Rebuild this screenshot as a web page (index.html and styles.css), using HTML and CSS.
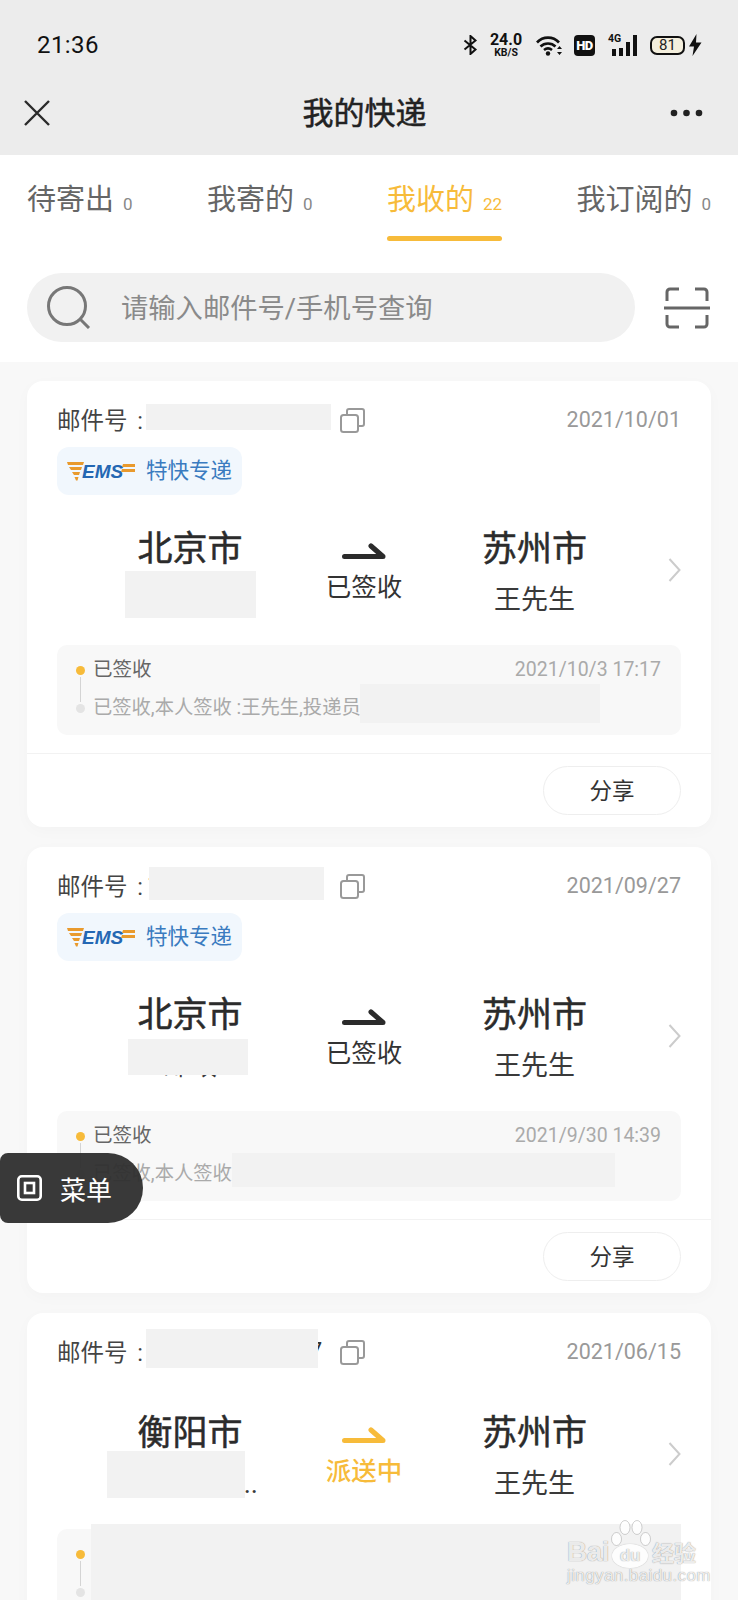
FILE: index.html
```html
<!DOCTYPE html>
<html lang="zh-CN">
<head>
<meta charset="utf-8">
<title>我的快递</title>
<link rel="stylesheet" href="styles.css">
</head>
<body>
<header class="top">
  <div class="status">
    <span class="time">21:36</span>
    <div class="status-icons">
      <svg class="i-bt" width="15" height="20" viewBox="0 0 15 20"><path d="M1.500 5.500 12.500 14.500 7.500 19V1l5 4.500L1.500 14.500" fill="none" stroke="#111" stroke-width="2"/></svg>
      <div class="speed"><b>24.0</b><small>KB/S</small></div>
      <svg class="i-wifi" width="27" height="21" viewBox="0 0 27 21"><g fill="none" stroke="#111" stroke-width="2.600"><path d="M1 7.500C7 1 17 1 23 7.500"/><path d="M4.500 11.500C8.500 7.500 15.500 7.500 19.500 11.500"/><path d="M8 15c2.500-2 5.500-2 8 0"/></g><circle cx="12" cy="18.500" r="2.200" fill="#111"/><path d="M23.500 11l2.500 3h-5zM23.500 20l2.500-3h-5z" fill="#111"/></svg>
      <div class="hd">HD</div>
      <div class="net">
        <span class="net-label">4G</span>
        <svg width="29" height="21" viewBox="0 0 29 21"><path d="M4 14h4v7H4zM11 13h4v8h-4zM18 7h4v14h-4zM25 0h4v21h-4z" fill="#111"/></svg>
      </div>
      <div class="battery">81</div>
      <svg class="i-bolt" width="14" height="22" viewBox="0 0 14 22"><path d="M8.500 0 1 12.500h5L4.500 22 13.500 8.500H8z" fill="#111"/></svg>
    </div>
  </div>
  <div class="nav">
    <svg class="nav-close" width="26" height="26" viewBox="0 0 26 26"><path d="M1 1 25 25M25 1 1 25" fill="none" stroke="#2a2a2a" stroke-width="2.400"/></svg>
    <h1 class="nav-title">我的快递</h1>
    <svg class="nav-more" width="33" height="8" viewBox="0 0 33 8"><circle cx="4" cy="4" r="3.300" fill="#222"/><circle cx="16.500" cy="4" r="3.300" fill="#222"/><circle cx="29" cy="4" r="3.300" fill="#222"/></svg>
  </div>
</header>

<section class="filters">
  <nav class="tabs">
    <a class="tab">待寄出<span class="count">0</span></a>
    <a class="tab">我寄的<span class="count">0</span></a>
    <a class="tab is-active">我收的<span class="count">22</span></a>
    <a class="tab">我订阅的<span class="count">0</span></a>
  </nav>
  <div class="search-row">
    <div class="search">
      <svg width="44" height="43" viewBox="0 0 44 43"><circle cx="20" cy="20" r="18.500" fill="none" stroke="#777" stroke-width="3"/><path d="M33 33 42 42" stroke="#777" stroke-width="3" fill="none"/></svg>
      <span class="search-hint">请输入邮件号/手机号查询</span>
    </div>
    <svg width="46" height="42" viewBox="0 0 46 42"><g fill="none" stroke="#666" stroke-width="3"><path d="M3 14V5a3 3 0 0 1 3-3h9M31 2h9a3 3 0 0 1 3 3v9M3 28v9a3 3 0 0 0 3 3h9M31 40h9a3 3 0 0 0 3-3v-9"/><path d="M0 21h46"/></g></svg>
  </div>
</section>

<main class="list">
  <article class="card">
    <div class="num-row">
      <span class="num-label">邮件号 :</span>
      <span class="num">1100000000001</span>
      <svg class="copy" width="25" height="25" viewBox="0 0 25 25"><g fill="none" stroke="#999" stroke-width="2"><rect x="1" y="7" width="17" height="17" rx="2.500"/><path d="M7 7V3a2 2 0 0 1 2-2h13a2 2 0 0 1 2 2v13a2 2 0 0 1-2 2h-4"/></g></svg>
      <span class="date">2021/10/01</span>
    </div>
    <div class="carrier">
      <svg width="68" height="20" viewBox="0 0 68 20"><path d="M0 1h17l-1 3H1zM2 6h13l-1 3H4zM5 11h8l-1 3H7zM7.500 16h4l-1 3.500H9z" fill="#e99a2d"/><text x="15" y="17" class="ems-word">EMS</text><path d="M56 3h12v3H55zM55 8h13v3H54z" fill="#e99a2d"/></svg>
      <span>特快专递</span>
    </div>
    <div class="route">
      <div class="place">
        <div class="city">北京市</div>
        <div class="person">中国邮政</div>
      </div>
      <div class="state">
        <svg width="44" height="17" viewBox="0 0 44 17"><path d="M2.500 13.500H41L29 3" fill="none" stroke="#2b2b2b" stroke-width="5" stroke-linecap="round" stroke-linejoin="round"/></svg>
        <span>已签收</span>
      </div>
      <div class="place place-to">
        <div class="city">苏州市</div>
        <div class="person">王先生</div>
      </div>
      <svg class="chevron" width="13" height="24" viewBox="0 0 13 24"><path d="M1.500 1 11.500 12 1.500 23" fill="none" stroke="#ccc" stroke-width="2"/></svg>
    </div>
    <div class="trace">
      <div class="track"><i class="dot dot-on"></i><i class="rail"></i><i class="dot"></i></div>
      <div class="trace-lines">
        <div class="trace-head"><span>已签收</span><time>2021/10/3 17:17</time></div>
        <div class="trace-text">已签收,本人签收 :王先生,投递员</div>
      </div>
    </div>
    <div class="actions"><button class="share">分享</button></div>
    <i class="mask m1-num"></i><i class="mask m1-person"></i><i class="mask m1-trace"></i>
  </article>

  <article class="card">
    <div class="num-row">
      <span class="num-label">邮件号 :</span>
      <span class="num">1100000000002</span>
      <svg class="copy" width="25" height="25" viewBox="0 0 25 25"><g fill="none" stroke="#999" stroke-width="2"><rect x="1" y="7" width="17" height="17" rx="2.500"/><path d="M7 7V3a2 2 0 0 1 2-2h13a2 2 0 0 1 2 2v13a2 2 0 0 1-2 2h-4"/></g></svg>
      <span class="date">2021/09/27</span>
    </div>
    <div class="carrier">
      <svg width="68" height="20" viewBox="0 0 68 20"><path d="M0 1h17l-1 3H1zM2 6h13l-1 3H4zM5 11h8l-1 3H7zM7.500 16h4l-1 3.500H9z" fill="#e99a2d"/><text x="15" y="17" class="ems-word">EMS</text><path d="M56 3h12v3H55zM55 8h13v3H54z" fill="#e99a2d"/></svg>
      <span>特快专递</span>
    </div>
    <div class="route">
      <div class="place">
        <div class="city">北京市</div>
        <div class="person">邮政</div>
      </div>
      <div class="state">
        <svg width="44" height="17" viewBox="0 0 44 17"><path d="M2.500 13.500H41L29 3" fill="none" stroke="#2b2b2b" stroke-width="5" stroke-linecap="round" stroke-linejoin="round"/></svg>
        <span>已签收</span>
      </div>
      <div class="place place-to">
        <div class="city">苏州市</div>
        <div class="person">王先生</div>
      </div>
      <svg class="chevron" width="13" height="24" viewBox="0 0 13 24"><path d="M1.500 1 11.500 12 1.500 23" fill="none" stroke="#ccc" stroke-width="2"/></svg>
    </div>
    <div class="trace">
      <div class="track"><i class="dot dot-on"></i><i class="rail"></i><i class="dot"></i></div>
      <div class="trace-lines">
        <div class="trace-head"><span>已签收</span><time>2021/9/30 14:39</time></div>
        <div class="trace-text">已签收,本人签收</div>
      </div>
    </div>
    <div class="actions"><button class="share">分享</button></div>
    <i class="mask m2-num"></i><i class="mask m2-person"></i><i class="mask m2-trace"></i>
  </article>

  <article class="card">
    <div class="num-row">
      <span class="num-label">邮件号 :</span>
      <span class="num">1100000000007</span>
      <svg class="copy" width="25" height="25" viewBox="0 0 25 25"><g fill="none" stroke="#999" stroke-width="2"><rect x="1" y="7" width="17" height="17" rx="2.500"/><path d="M7 7V3a2 2 0 0 1 2-2h13a2 2 0 0 1 2 2v13a2 2 0 0 1-2 2h-4"/></g></svg>
      <span class="date">2021/06/15</span>
    </div>
    <div class="route">
      <div class="place">
        <div class="city">衡阳市</div>
        <div class="person">&#8194;中国邮政..</div>
      </div>
      <div class="state is-moving">
        <svg width="44" height="17" viewBox="0 0 44 17"><path d="M2.500 13.500H41L29 3" fill="none" stroke="#f7bb3a" stroke-width="5" stroke-linecap="round" stroke-linejoin="round"/></svg>
        <span>派送中</span>
      </div>
      <div class="place place-to">
        <div class="city">苏州市</div>
        <div class="person">王先生</div>
      </div>
      <svg class="chevron" width="13" height="24" viewBox="0 0 13 24"><path d="M1.500 1 11.500 12 1.500 23" fill="none" stroke="#ccc" stroke-width="2"/></svg>
    </div>
    <div class="trace">
      <div class="track"><i class="dot dot-on"></i><i class="rail"></i><i class="dot"></i></div>
    </div>
    <i class="mask m3-num"></i><i class="mask m3-person"></i><i class="mask m3-trace"></i>
  </article>
</main>

<button class="menu-float">
  <svg width="25" height="26" viewBox="0 0 25 26"><rect x="1.300" y="1.300" width="22.400" height="23.400" rx="3.500" fill="none" stroke="#fff" stroke-width="2.600"/><rect x="8" y="8" width="9" height="10" fill="none" stroke="#fff" stroke-width="2.600"/></svg>
  <span>菜单</span>
</button>

<div class="watermark">
  <svg class="paw" width="40" height="32" viewBox="0 0 40 32"><g fill="#fff" fill-opacity=".8" stroke="#aaa" stroke-opacity=".55"><ellipse cx="5.500" cy="19" rx="5" ry="6.500"/><ellipse cx="14" cy="7.500" rx="5" ry="7"/><ellipse cx="26" cy="7.500" rx="5" ry="7"/><ellipse cx="34.500" cy="19" rx="5" ry="6.500"/></g></svg>
  <div class="wm-brand"><span class="wm-bai">Bai</span><span class="wm-du">du</span><span class="wm-jy">经验</span></div>
  <div class="wm-url">jingyan.baidu.com</div>
</div>
</body>
</html>
```

FILE: styles.css
```css
* { box-sizing: border-box; }

html, body {
  margin: 0;
  height: 1600px;
  overflow: hidden;
}

body {
  position: relative;
  background: #f8f8f8;
  font-family: Roboto, "Noto Sans CJK SC", sans-serif;
  color: #333;
}

i { display: block; }

/* Status bar and title bar */
.top { height: 155px; background: #ececec; }

.status {
  height: 90px;
  padding: 0 36px 0 37px;
  display: flex;
  align-items: center;
  justify-content: space-between;
}

.time { font-size: 24px; color: #111; letter-spacing: .4px; }

.status-icons { display: flex; align-items: center; }

.speed {
  margin-left: 12px;
  width: 32px;
  display: flex;
  flex-direction: column;
  align-items: center;
  color: #111;
}
.speed b { font-size: 16px; line-height: 15px; font-weight: 700; }
.speed small { font-size: 10.500px; line-height: 11px; font-weight: 700; }

.i-wifi { margin-left: 14px; }

.hd {
  margin-left: 11px;
  width: 21px;
  height: 21px;
  border-radius: 4px;
  background: #111;
  color: #fff;
  font-size: 13px;
  line-height: 21px;
  font-weight: 900;
  text-align: center;
  letter-spacing: -.5px;
}

.net { margin-left: 13px; position: relative; width: 29px; height: 21px; }
.net-label {
  position: absolute;
  left: 0;
  top: -2px;
  font-size: 10.500px;
  line-height: 12px;
  font-weight: 700;
  color: #111;
}

.battery {
  margin-left: 13px;
  width: 35px;
  height: 19px;
  border: 2px solid #111;
  border-radius: 7px;
  background: #f4efdd;
  font-size: 15px;
  line-height: 15px;
  text-align: center;
  color: #222;
}

.i-bolt { margin-left: 3px; }

.nav {
  height: 65px;
  padding: 0 35px 25px 24px;
  display: grid;
  grid-template-columns: 1fr auto 1fr;
  align-items: center;
}
.nav-title {
  margin: 2px 0 0 2px;
  font-size: 31px;
  line-height: 44px;
  font-weight: 400;
  -webkit-text-stroke: .5px #222;
  color: #222;
}
.nav-more { justify-self: end; }

/* Tabs and search */
.filters { height: 207px; background: #fff; }

.tabs {
  padding: 0 27px;
  display: flex;
  justify-content: space-between;
}

.tab {
  padding-top: 25px;
  font-size: 29px;
  line-height: 40px;
  color: #666;
  white-space: nowrap;
}
.tab::after {
  content: "";
  display: block;
  height: 5px;
  margin-top: 16px;
  border-radius: 3px;
}
.tab.is-active { color: #f7bb3a; }
.tab.is-active::after { background: #f7bb3a; }

.count {
  margin-left: 9px;
  font-size: 17px;
  line-height: 1;
  color: #888;
}
.is-active .count { color: #f7bb3a; }

.search-row {
  margin-top: 32px;
  padding: 0 28px 0 27px;
  display: flex;
  align-items: center;
  justify-content: space-between;
}

.search {
  width: 608px;
  height: 69px;
  padding-left: 20px;
  display: flex;
  align-items: center;
  gap: 30px;
  border-radius: 35px;
  background: #f1f1f1;
}
.search-hint { padding-bottom: 4px; font-size: 27.300px; color: #8a8a8a; white-space: nowrap; }

/* Parcel cards */
.list {
  padding: 19px 27px 0;
  display: flex;
  flex-direction: column;
  gap: 20px;
}

.card {
  position: relative;
  flex: none;
  height: 446px;
  padding: 20px 30px 0;
  border-radius: 16px;
  background: #fff;
  box-shadow: 0 4px 16px rgba(0, 0, 0, .025);
}

.num-row {
  height: 36px;
  margin-bottom: 10px;
  display: flex;
  align-items: center;
  white-space: nowrap;
}
.num-label { flex: none; width: 90px; font-size: 23.500px; word-spacing: 4px; color: #444; }
.num { font-size: 24px; color: #333; }
.copy { margin-left: 18px; margin-top: 2px; }
.date { margin-left: auto; font-size: 21.500px; color: #999; }

.carrier {
  width: 185px;
  height: 48px;
  padding-left: 10px;
  display: flex;
  align-items: center;
  gap: 11px;
  border-radius: 12px;
  background: #f1f7fd;
  color: #3a7bc0;
  font-size: 21.500px;
  line-height: 30px;
}
.ems-word {
  font-family: "Liberation Sans", sans-serif;
  font-size: 19px;
  font-weight: 700;
  font-style: italic;
  fill: #2467b3;
}

.route {
  height: 150px;
  display: grid;
  grid-template-columns: 266px 82px 1fr 13px;
}

.place { padding-top: 35px; text-align: center; }
.place-to { padding-right: 4px; }
.city {
  height: 40px;
  font-size: 35px;
  line-height: 40px;
  font-weight: 400;
  -webkit-text-stroke: .5px #2b2b2b;
  color: #2b2b2b;
}
.person {
  margin-top: 12px;
  height: 36px;
  font-size: 27px;
  line-height: 36px;
  color: #3a3a3a;
  white-space: nowrap;
}

.state {
  padding-top: 48px;
  display: flex;
  flex-direction: column;
  align-items: center;
  gap: 10px;
  font-size: 25.500px;
  line-height: 34px;
  color: #333;
  white-space: nowrap;
}
.state.is-moving { color: #f7bb3a; font-weight: 500; }

.chevron { margin-top: 63px; }

.trace {
  height: 90px;
  padding: 21px 20px 0 18px;
  display: flex;
  border-radius: 10px;
  background: #f8f8f8;
}

.track {
  flex: none;
  width: 10px;
  height: 47px;
  margin-right: 8px;
  display: flex;
  flex-direction: column;
  align-items: center;
}
.dot { width: 9px; height: 9px; border-radius: 50%; background: #e4e4e4; flex: none; }
.dot-on { background: #f7bb3a; }
.rail { width: 1px; flex: 1; margin: 2px 0; background: #d4d4d4; }

.trace-lines { flex: 1; min-width: 0; margin-top: -11px; }
.trace-head {
  height: 38px;
  display: flex;
  justify-content: space-between;
  align-items: flex-start;
  font-size: 19.500px;
  line-height: 30px;
  color: #666;
}
.trace-head time { font-size: 19.500px; color: #aaa; }
.trace-text { font-size: 19.300px; line-height: 30px; color: #aaa; white-space: nowrap; }

.actions {
  margin: 18px -30px 0;
  height: 74px;
  padding: 12px 30px 0;
  display: flex;
  justify-content: flex-end;
  align-items: flex-start;
  border-top: 1px solid #f2f2f2;
}

.share {
  width: 138px;
  height: 49px;
  padding: 0 0 4px;
  border: 1px solid #eee;
  border-radius: 25px;
  background: #fff;
  font: inherit;
  font-size: 22.500px;
  color: #333;
}

/* Blanked-out personal details laid over the card */
.mask { position: absolute; background: #f2f2f2; }
.m1-num { left: 119px; top: 23px; width: 185px; height: 26px; }
.m1-person { left: 98px; top: 190px; width: 131px; height: 47px; }
.m1-trace { left: 333px; top: 303px; width: 240px; height: 39px; }
.m2-num { left: 122px; top: 20px; width: 175px; height: 33px; }
.m2-person { left: 101px; top: 192px; width: 120px; height: 36px; }
.m2-trace { left: 205px; top: 306px; width: 383px; height: 34px; }
.m3-num { left: 119px; top: 16px; width: 172px; height: 39px; }
.m3-person { left: 80px; top: 138px; width: 138px; height: 47px; }
.m3-trace { left: 64px; top: 211px; width: 590px; height: 120px; }

/* Floating menu handle */
.menu-float {
  position: absolute;
  left: 0;
  top: 1153px;
  width: 143px;
  height: 70px;
  padding: 0 0 0 17px;
  display: flex;
  align-items: center;
  gap: 18px;
  border: 0;
  border-radius: 8px 35px 35px 8px;
  background: rgba(46, 46, 46, .95);
  color: #fff;
  font: inherit;
  font-size: 26px;
}

/* Site watermark */
.watermark {
  position: absolute;
  left: 567px;
  top: 1520px;
  width: 134px;
  height: 64px;
  color: rgba(255, 255, 255, .85);
  text-shadow: 0 0 1px rgba(0, 0, 0, .5);
}
.paw { position: absolute; left: 44px; top: 0; }
.wm-brand {
  position: absolute;
  left: 0;
  top: 15px;
  display: flex;
  align-items: baseline;
  font-family: "Liberation Sans", sans-serif;
  font-weight: 700;
  white-space: nowrap;
}
.wm-bai { font-size: 28px; letter-spacing: -.5px; }
.wm-du {
  margin-left: 3px;
  width: 36px;
  height: 24px;
  border-radius: 50%;
  background: rgba(255, 255, 255, .8);
  font-size: 17px;
  line-height: 24px;
  text-align: center;
  box-shadow: 0 0 1px rgba(0, 0, 0, .35);
}
.wm-jy { margin-left: 4px; font-size: 22px; font-family: "Noto Sans CJK SC", sans-serif; }
.wm-url {
  position: absolute;
  left: 0;
  top: 46px;
  font-family: "Liberation Sans", sans-serif;
  font-size: 17px;
  letter-spacing: .4px;
  white-space: nowrap;
}
```
